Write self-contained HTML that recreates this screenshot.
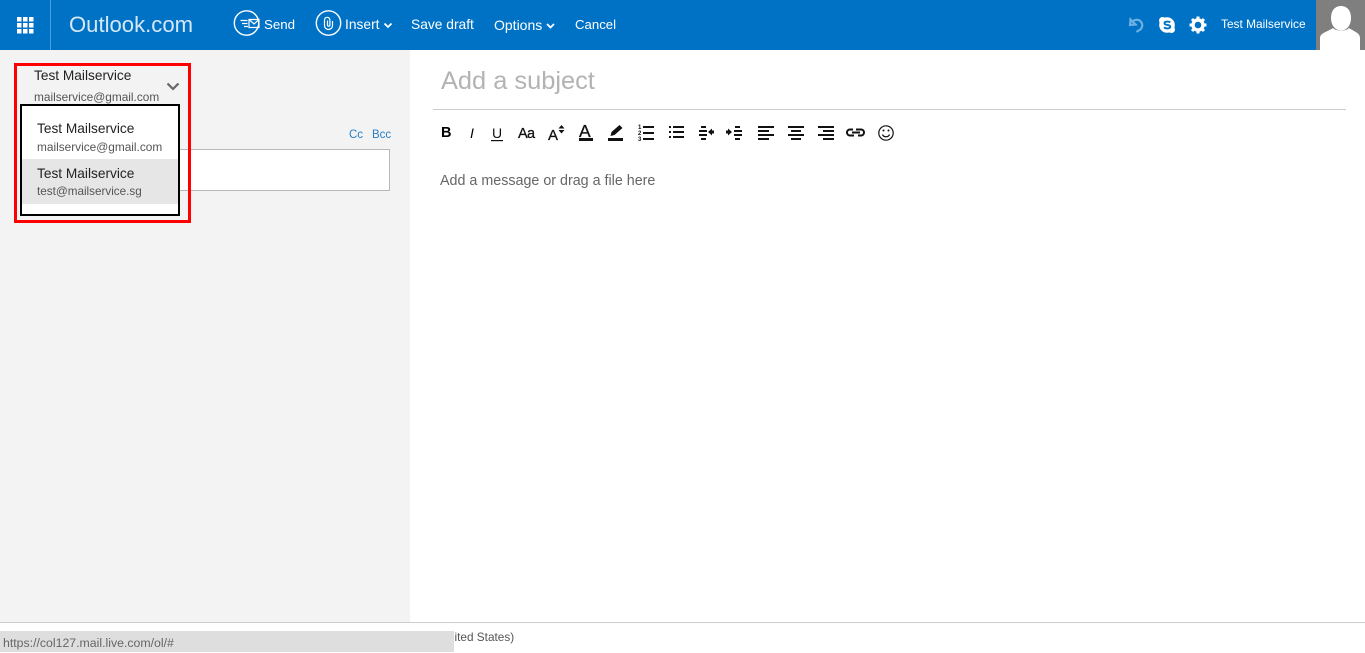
<!DOCTYPE html>
<html><head><meta charset="utf-8"><title>Outlook.com</title>
<style>
html,body{margin:0;padding:0;width:1365px;height:652px;overflow:hidden;background:#fff;font-family:"Liberation Sans",sans-serif}
div,span.t,svg{position:absolute}
.t{position:absolute;white-space:nowrap;line-height:20px;height:20px}
.h{color:#fff}
.g{color:#555}
.k{-webkit-text-stroke:.3px #111;color:#111}
</style></head><body>
<div style="left:0;top:50px;width:410px;height:572px;background:#f3f3f3"></div>
<div style="left:0;top:622px;width:1365px;height:1px;background:#ccc"></div>
<div style="left:0;top:0;width:1365px;height:50px;background:#0072c6"></div>
<div style="left:50px;top:0;width:1px;height:50px;background:#4d9cd7"></div>

<svg style="left:0;top:0" width="560" height="50" fill="none">
<g fill="#fff"><rect x="17" y="17" width="4.500" height="4.500"/><rect x="23" y="17" width="4.500" height="4.500"/><rect x="29" y="17" width="4.500" height="4.500"/><rect x="17" y="23" width="4.500" height="4.500"/><rect x="23" y="23" width="4.500" height="4.500"/><rect x="29" y="23" width="4.500" height="4.500"/><rect x="17" y="29" width="4.500" height="4.500"/><rect x="23" y="29" width="4.500" height="4.500"/><rect x="29" y="29" width="4.500" height="4.500"/></g>
<circle cx="246.500" cy="23" r="12.200" stroke="#fff" stroke-width="1.400"/>
<path d="M249 19.500h10v8h-10zM249 19.500l5 4.500 5-4.500M240.500 20.500h7M242 23.500h5.500M244 26.500h4" stroke="#fff" stroke-width="1.200"/>
<circle cx="328.500" cy="23" r="12.200" stroke="#fff" stroke-width="1.400"/>
<path d="M332.500 21v4.500a4 4 0 0 1-8 0v-5.500a2.700 2.700 0 0 1 5.400 0v5a1.200 1.200 0 0 1-2.400 0v-4.500" stroke="#fff" stroke-width="1.200"/>
<path d="M384.500 23.500l3.500 3.500 3.500-3.500M547 24l3.500 3.500 3.500-3.500" stroke="#fff" stroke-width="1.800"/>
</svg>

<span class="t h" style="left:69px;top:15px;font-size:22.100px;color:#d5e8f6">Outlook.com</span>
<span class="t h" style="left:264px;top:15px;font-size:13.300px">Send</span>
<span class="t h" style="left:345px;top:15px;font-size:13.800px">Insert</span>
<span class="t h" style="left:411px;top:15px;font-size:13.800px">Save draft</span>
<span class="t h" style="left:494px;top:15px;font-size:14px">Options</span>
<span class="t h" style="left:575px;top:15px;font-size:13.200px">Cancel</span>
<span class="t h" style="left:1221px;top:14px;font-size:11.900px">Test Mailservice</span>

<svg style="left:1125px;top:12px" width="85" height="26" fill="none">
<path d="M5.500 7.500l-.5 5.500 5.500-.5zM7 10.500a5.500 5.500 0 1 1 6.500 8l-2 1.500" stroke="#6db0e2" stroke-width="2.200"/>
<circle cx="42" cy="13" r="7.800" fill="#fff"/><circle cx="37.500" cy="8.500" r="3.500" fill="#fff"/><circle cx="46.500" cy="17.500" r="3.500" fill="#fff"/>
<path d="M45.200 10.500c-1-1.300-5.800-1.400-5.700.8.100 2.300 5.700 1 5.800 3.400.1 2.300-5 2.100-6.200.5" stroke="#0072c6" stroke-width="1.900"/>
<circle cx="73" cy="13" r="5" stroke="#fff" stroke-width="3.400"/>
<path d="M73 4.500v3.500M73 18v3.500M64.500 13h3.500M78 13h3.500M67 7l2.500 2.500M76.500 16.500L79 19M79 7l-2.500 2.500M69.500 16.500L67 19" stroke="#fff" stroke-width="3"/>
</svg>

<div style="left:1316px;top:0;width:49px;height:50px;background:#7f7f7f;overflow:hidden">
<svg width="49" height="50" style="left:0;top:0"><path d="M15 18c0-8 4.500-12 10-12s10 4 10 12c0 7-4 12.500-10 12.500S15 25 15 18z" fill="#fff"/><path d="M4 50V38c0-5 7-6 13-10 3 3.500 13 3.500 16 0 6 4 11 5 11 10v12z" fill="#fff"/></svg>
</div>

<span class="t" style="left:34px;top:66px;font-size:13.700px;color:#222">Test Mailservice</span>
<span class="t g" style="left:34px;top:87px;font-size:11.850px">mailservice@gmail.com</span>
<svg style="left:165px;top:80px" width="16" height="14" fill="none"><path d="M2.500 3.500l5.500 5.500 5.500-5.500" stroke="#666" stroke-width="2.200"/></svg>

<span class="t" style="left:349px;top:125px;font-size:11.500px;color:#2a7fc6">Cc</span>
<span class="t" style="left:372px;top:125px;font-size:11.500px;color:#2a7fc6">Bcc</span>
<div style="left:170px;top:149px;width:218px;height:40px;border:1px solid #b8b8b8;background:#fff"></div>

<div style="left:14px;top:63px;width:171px;height:154px;border:3px solid #f00"></div>
<div style="left:20px;top:104px;width:156px;height:108px;border:2px solid #000;background:#fff"></div>
<div style="left:22px;top:159px;width:156px;height:45px;background:#e6e6e6"></div>
<span class="t" style="left:37px;top:119px;font-size:13.700px;color:#222">Test Mailservice</span>
<span class="t g" style="left:37px;top:137px;font-size:11.850px">mailservice@gmail.com</span>
<span class="t" style="left:37px;top:164px;font-size:13.700px;color:#222">Test Mailservice</span>
<span class="t g" style="left:37px;top:182px;font-size:11.700px">test@mailservice.sg</span>

<span class="t" style="left:441px;top:71px;font-size:25.400px;color:#b3b3b3">Add a subject</span>
<div style="left:433px;top:109px;width:913px;height:1px;background:#ccc"></div>

<span class="t" style="left:441px;top:123px;font-size:14.500px;font-weight:bold;color:#000">B</span>
<span class="t" style="left:470px;top:123px;font-size:14px;font-style:italic;color:#000">I</span>
<span class="t" style="left:492px;top:123px;font-size:14px;color:#111">U</span>
<span class="t k" style="left:518px;top:124px;font-size:14.500px;letter-spacing:-.7px">Aa</span>
<span class="t k" style="left:548px;top:126px;font-size:15px">A</span>
<span class="t k" style="left:579px;top:121px;font-size:17.500px">A</span>

<svg style="left:430px;top:115px" width="480" height="35" fill="#111">
<rect x="61" y="25" width="12" height="1.200"/>
<path d="M131.500 10l3 3.500h-6zM128.500 15h6l-3 3.500z"/>
<rect x="149" y="23" width="14" height="3"/>
<rect x="178" y="23" width="15" height="3"/>
<path d="M180.500 21l1-4 8-7 3 3-8 7z"/>
<g><rect x="213" y="11" width="11" height="2"/><rect x="213" y="17" width="11" height="2"/><rect x="213" y="23" width="11" height="2"/>
<text x="208" y="14" font-size="6" font-weight="bold" font-family="Liberation Sans,sans-serif">1</text><text x="208" y="20" font-size="6" font-weight="bold" font-family="Liberation Sans,sans-serif">2</text><text x="208" y="26" font-size="6" font-weight="bold" font-family="Liberation Sans,sans-serif">3</text></g>
<g><rect x="239" y="11" width="2" height="2"/><rect x="239" y="16" width="2" height="2"/><rect x="239" y="21" width="2" height="2"/>
<rect x="243" y="11" width="11" height="2"/><rect x="243" y="16" width="11" height="2"/><rect x="243" y="21" width="11" height="2"/></g>
<g><rect x="271" y="11" width="5" height="2"/><rect x="269" y="15" width="8" height="2"/><rect x="269" y="19" width="8" height="2"/><rect x="271" y="23" width="5" height="2"/><path d="M278 17l4-3.500v2h2v3h-2v2z"/></g>
<g><rect x="305" y="11" width="5" height="2"/><rect x="304" y="15" width="8" height="2"/><rect x="304" y="19" width="8" height="2"/><rect x="305" y="23" width="5" height="2"/><path d="M302 17l-4-3.500v2h-2v3h2v2z"/></g>
<g><rect x="328" y="11" width="16" height="2"/><rect x="328" y="15" width="11" height="2"/><rect x="328" y="19" width="16" height="2"/><rect x="328" y="23" width="11" height="2"/></g>
<g><rect x="358" y="11" width="16" height="2"/><rect x="361" y="15" width="10" height="2"/><rect x="358" y="19" width="16" height="2"/><rect x="361" y="23" width="10" height="2"/></g>
<g><rect x="388" y="11" width="16" height="2"/><rect x="393" y="15" width="11" height="2"/><rect x="388" y="19" width="16" height="2"/><rect x="393" y="23" width="11" height="2"/></g>
<g fill="none" stroke="#111"><path d="M423 14.500h-3a3 3 0 0 0 0 6h4M426 14.500h5a3 3 0 0 1 0 6h-3M422 17.500h8" stroke-width="2"/>
<circle cx="456" cy="18" r="7.200" stroke-width="1.200"/><path d="M452.500 19.500c1 3 6 3 7 0" stroke-width="1.200"/></g>
<circle cx="453.500" cy="15.500" r="1"/><circle cx="458.500" cy="15.500" r="1"/>
</svg>

<span class="t" style="left:440px;top:171px;font-size:14.300px;color:#666">Add a message or drag a file here</span>

<span class="t" style="left:454.500px;top:627px;font-size:11.800px;color:#555">ited States)</span>
<div style="left:0;top:631px;width:454px;height:21px;background:#dedede"></div>
<span class="t" style="left:3px;top:633px;font-size:12.300px;color:#666">https://col127.mail.live.com/ol/#</span>
</body></html>
